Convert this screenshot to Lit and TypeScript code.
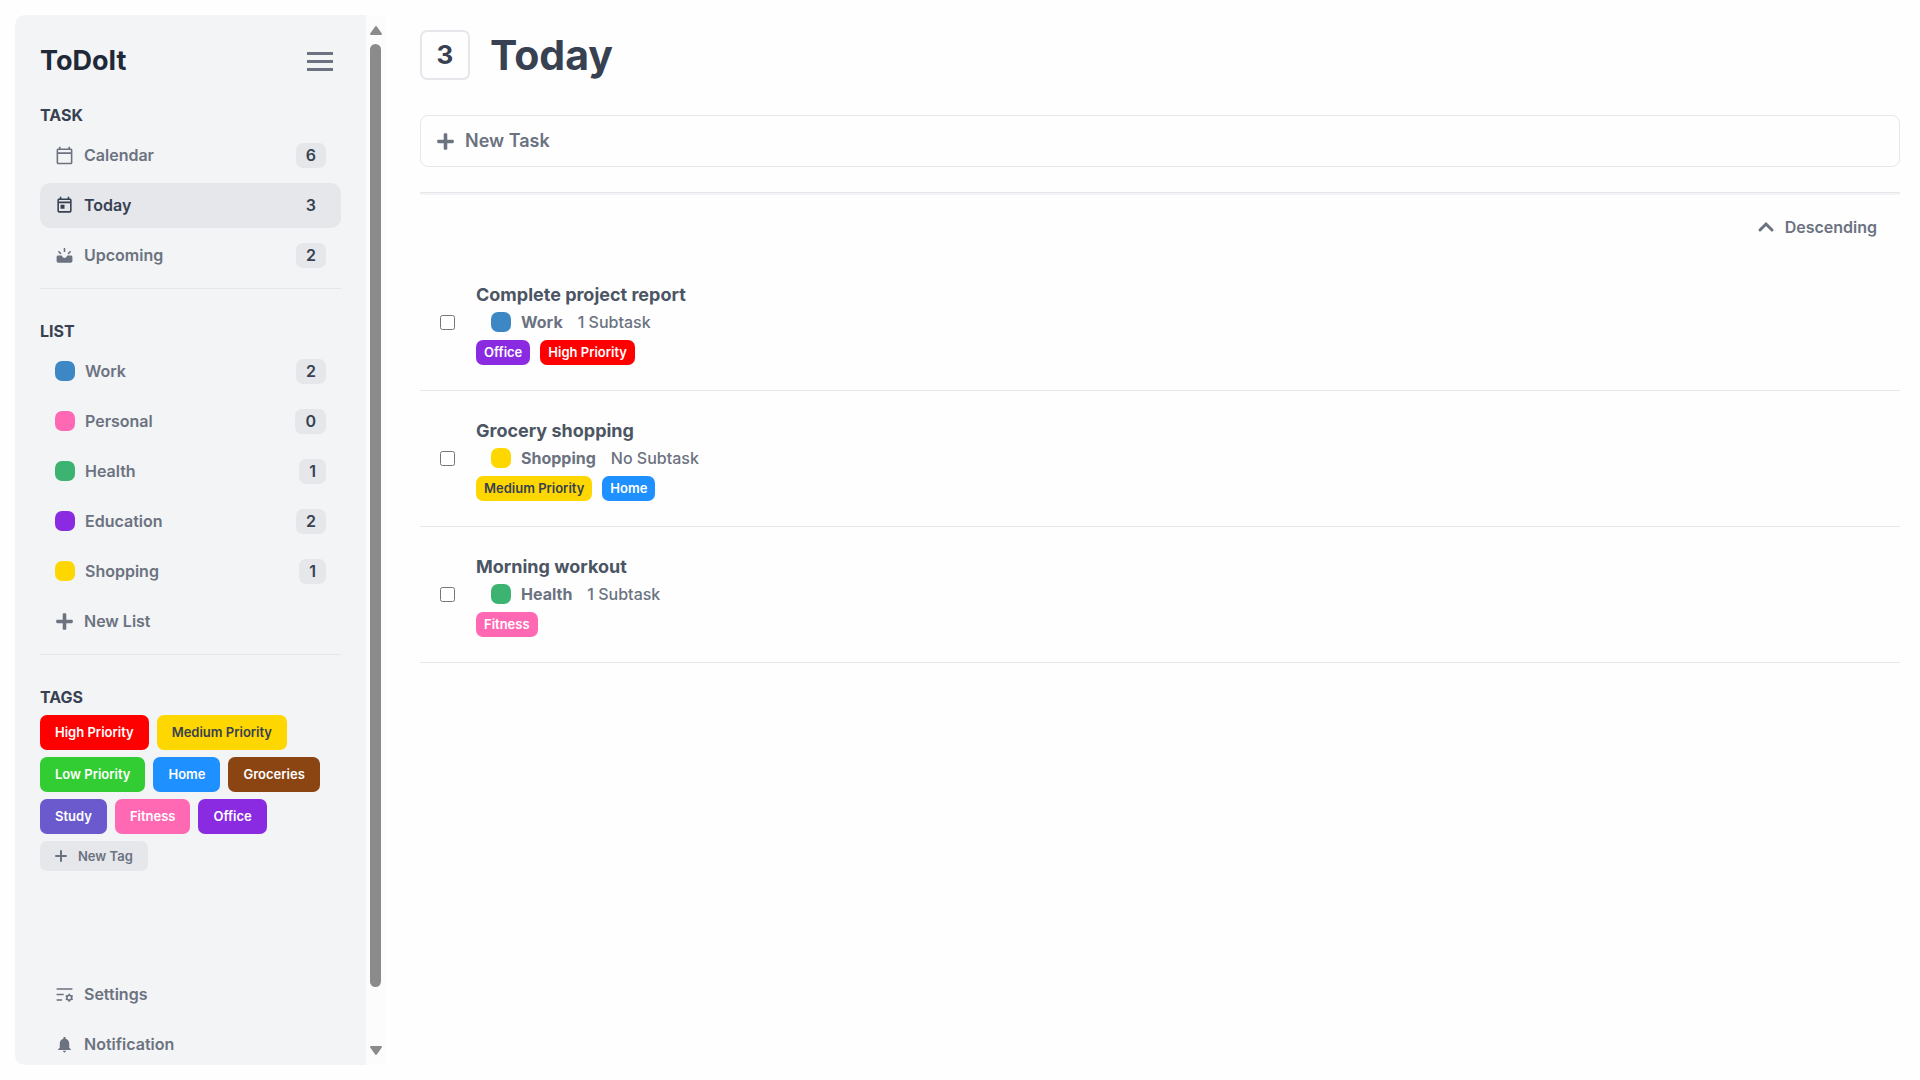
import { LitElement, html, css, svg, nothing } from "lit";
import { customElement, property } from "lit/decorators.js";
import { classMap } from "lit/directives/class-map.js";
import { styleMap } from "lit/directives/style-map.js";

interface NavEntry {
  label: string;
  icon: IconName;
  count?: number;
}

interface TaskEntry {
  title: string;
  list: string;
  subtasks: string;
  tags: string[];
}

const PLUS_PATH =
  "M416 208H272V64c0-17.67-14.33-32-32-32h-32c-17.67 0-32 14.33-32 32v144H32c-17.67 0-32 14.33-32 32v32c0 17.67 14.33 32 32 32h144v144c0 17.67 14.33 32 32 32h32c17.67 0 32-14.33 32-32V304h144c17.67 0 32-14.33 32-32v-32c0-17.67-14.33-32-32-32z";

const ICONS = {
  calendar: {
    box: "0 0 24 24",
    art: svg`<path d="M20 3h-1V1h-2v2H7V1H5v2H4c-1.1 0-2 .9-2 2v16c0 1.1.9 2 2 2h16c1.1 0 2-.9 2-2V5c0-1.1-.9-2-2-2zm0 18H4V10h16v11zm0-13H4V5h16v3z"/>`,
  },
  today: {
    box: "0 0 24 24",
    art: svg`<path d="M19 3h-1V1h-2v2H8V1H6v2H5c-1.11 0-1.99.9-1.99 2L3 19c0 1.1.89 2 2 2h14c1.1 0 2-.9 2-2V5c0-1.1-.9-2-2-2zm0 16H5V9h14v10zm0-12H5V5h14v2zM7 11h5v5H7z"/>`,
  },
  upcoming: {
    box: "0 0 24 24",
    art: svg`<path d="M4 12h4c.6 0 .9.4 1.1.9.5 1.2 1.6 2.1 2.9 2.1s2.4-.9 2.9-2.1c.2-.5.5-.9 1.1-.9h4c1.1 0 2 .9 2 2v5c0 1.1-.9 2-2 2H4c-1.1 0-2-.9-2-2v-5c0-1.1.9-2 2-2z"/><path d="M12 2.500v5M4.300 6.700l3.200 3.200M19.700 6.700l-3.200 3.200" fill="none" stroke="currentColor" stroke-width="2"/>`,
  },
  settings: {
    box: "0 0 24 24",
    art: svg`<path d="M2 18h7v2H2v-2zm0-7h9v2H2v-2zm0-7h20v2H2V4zm18.674 9.025l1.156-.391 1 1.732-.916.805a4.017 4.017 0 0 1 0 1.658l.916.805-1 1.732-1.156-.391c-.41.37-.898.655-1.435.83L19 21h-2l-.24-1.196a3.997 3.997 0 0 1-1.434-.83l-1.156.392-1-1.732.916-.805a4.017 4.017 0 0 1 0-1.658l-.916-.805 1-1.732 1.156.391c.41-.37.898-.655 1.435-.83L17 11h2l.24 1.196c.536.174 1.024.46 1.434.83zM18 18a2 2 0 1 0 0-4 2 2 0 0 0 0 4z"/>`,
  },
  bell: {
    box: "0 0 24 24",
    art: svg`<path d="M12 22c1.1 0 2-.9 2-2h-4c0 1.1.9 2 2 2zm6-6v-5c0-3.07-1.63-5.64-4.5-6.32V4c0-.83-.67-1.5-1.5-1.5s-1.5.67-1.5 1.5v.68C7.64 5.36 6 7.92 6 11v5l-2 2v1h16v-1l-2-2z"/>`,
  },
  plus: { box: "0 0 448 512", art: svg`<path d=${PLUS_PATH} />` },
  plusThin: {
    box: "0 0 12 12",
    art: svg`<path d="M6 1v10M1 6h10" fill="none" stroke="currentColor" stroke-width="2" stroke-linecap="round"/>`,
  },
  chevron: {
    box: "0 0 20 20",
    art: svg`<path d="M4 13l6-6 6 6" fill="none" stroke="currentColor" stroke-width="3" stroke-linecap="round"/>`,
  },
  menu: {
    box: "0 0 26 26",
    art: svg`<path d="M0 4h26v3H0zM0 12h26v3H0zM0 20h26v3H0z"/>`,
  },
};

type IconName = keyof typeof ICONS;

const LIST_COLORS: Record<string, string> = {
  Work: "#3d87c5",
  Personal: "#ff69b4",
  Health: "#3cb371",
  Education: "#8a2be2",
  Shopping: "#ffd700",
};

const LISTS: [string, number][] = [
  ["Work", 2],
  ["Personal", 0],
  ["Health", 1],
  ["Education", 2],
  ["Shopping", 1],
];

const TAGS: Record<string, { back: string; ink: string }> = {
  "High Priority": { back: "#ff0000", ink: "#ffffff" },
  "Medium Priority": { back: "#ffd700", ink: "#374151" },
  "Low Priority": { back: "#32cd32", ink: "#ffffff" },
  Home: { back: "#1e90ff", ink: "#ffffff" },
  Groceries: { back: "#8b4513", ink: "#ffffff" },
  Study: { back: "#6a5acd", ink: "#ffffff" },
  Fitness: { back: "#ff69b4", ink: "#ffffff" },
  Office: { back: "#8a2be2", ink: "#ffffff" },
};

const TASK_NAV: NavEntry[] = [
  { label: "Calendar", icon: "calendar", count: 6 },
  { label: "Today", icon: "today", count: 3 },
  { label: "Upcoming", icon: "upcoming", count: 2 },
];

const FOOT_NAV: NavEntry[] = [
  { label: "Settings", icon: "settings" },
  { label: "Notification", icon: "bell" },
];

const TASKS: TaskEntry[] = [
  { title: "Complete project report", list: "Work", subtasks: "1 Subtask", tags: ["Office", "High Priority"] },
  { title: "Grocery shopping", list: "Shopping", subtasks: "No Subtask", tags: ["Medium Priority", "Home"] },
  { title: "Morning workout", list: "Health", subtasks: "1 Subtask", tags: ["Fitness"] },
];

const base = css`
  *,
  *::before,
  *::after {
    box-sizing: border-box;
  }
  h1,
  h2,
  h3,
  p,
  ul {
    margin: 0;
    padding: 0;
  }
  ul {
    list-style: none;
  }
  a {
    color: inherit;
    text-decoration: none;
  }
  button,
  input {
    font: inherit;
    color: inherit;
    border: 0;
    background: none;
    padding: 0;
  }
  button {
    cursor: pointer;
  }
  .icon {
    display: block;
    flex: none;
    width: 19px;
    height: 19px;
    fill: currentColor;
  }
  .swatch {
    flex: none;
    width: 20px;
    height: 20px;
    border-radius: 7px;
  }
`;

const icon = (name: IconName) =>
  svg`<svg class="icon" viewBox=${ICONS[name].box} aria-hidden="true">${ICONS[name].art}</svg>`;

const swatch = (list: string) =>
  html`<span class="swatch" style=${styleMap({ background: LIST_COLORS[list] })}></span>`;

const tagStyle = (name: string) => styleMap({ background: TAGS[name].back, color: TAGS[name].ink });

@customElement("side-bar")
export class SideBar extends LitElement {
  @property() current = "Today";

  static styles = [
    base,
    css`
      :host {
        display: flex;
        flex: none;
        width: 370px;
        height: calc(100vh - 30px);
        border-radius: 10px 0 0 10px;
        overflow: hidden;
        background: #f3f4f6;
      }
      .content {
        flex: 1;
        min-width: 0;
        overflow: hidden;
        padding: 25px 25px 0;
      }
      .brand {
        display: flex;
        align-items: center;
        justify-content: space-between;
        height: 42px;
        padding-right: 8px;
        margin-bottom: 21px;
      }
      .logo {
        font-size: 27px;
        font-weight: 700;
        color: #1f2937;
      }
      .menu {
        color: #6b7280;
      }
      .menu .icon {
        width: 26px;
        height: 26px;
      }
      .heading {
        font-size: 16px;
        line-height: 24px;
        font-weight: 700;
        color: #374151;
        margin-bottom: 6px;
      }
      .rows {
        display: flex;
        flex-direction: column;
        gap: 5px;
      }
      .row {
        display: flex;
        align-items: center;
        gap: 10px;
        width: 100%;
        height: 45px;
        padding: 0 15px 1px;
        border-radius: 10px;
        font-weight: 600;
        color: #6b7280;
      }
      .row.current {
        background: #e5e7eb;
        color: #374151;
      }
      .count {
        margin-left: auto;
        padding: 0 10px;
        line-height: 25px;
        border-radius: 7px;
        background: #e5e7eb;
        color: #374151;
      }
      .rule {
        height: 1px;
        margin: 10px 0 30px;
        border: 0;
        background: #e5e7eb;
      }
      .tags {
        display: flex;
        flex-wrap: wrap;
        gap: 7px 8px;
        font-size: 13px;
        font-weight: 600;
      }
      .tag {
        height: 35px;
        padding: 0 15px 2px;
        border-radius: 7px;
      }
      .new-tag {
        display: flex;
        align-items: center;
        gap: 11px;
        height: 30px;
        padding: 0 15px;
        border-radius: 7px;
        background: #e5e7eb;
        color: #6b7280;
      }
      .new-tag .icon {
        width: 12px;
        height: 12px;
      }
      .foot {
        margin-top: 101px;
      }
      .scroll {
        display: flex;
        flex-direction: column;
        align-items: center;
        flex: none;
        width: 19px;
        padding: 10px 0 9px;
        background: #fcfcfc;
        color: #8b8b8b;
      }
      .arrow {
        width: 12px;
        height: 10px;
        fill: currentColor;
        stroke: currentColor;
        stroke-width: 2;
        stroke-linejoin: round;
      }
      .track {
        flex: 1;
        width: 11px;
        margin: 9px 0;
      }
      .thumb {
        width: 11px;
        height: 95%;
        border-radius: 6px;
        background: #8b8b8b;
      }
    `,
  ];

  private row({ label, icon: name, count }: NavEntry) {
    return html`<li>
      <a class=${classMap({ row: true, current: label === this.current })} href="#${label.toLowerCase()}">
        ${icon(name)}<span>${label}</span>
        ${count === undefined ? nothing : html`<span class="count">${count}</span>`}
      </a>
    </li>`;
  }

  render() {
    return html`
      <nav class="content">
        <div class="brand">
          <span class="logo">ToDoIt</span>
          <button class="menu" aria-label="Menu">${icon("menu")}</button>
        </div>
        <h2 class="heading">TASK</h2>
        <ul class="rows">
          ${TASK_NAV.map((entry) => this.row(entry))}
        </ul>
        <hr class="rule" />
        <h2 class="heading">LIST</h2>
        <ul class="rows">
          ${LISTS.map(
            ([name, count]) => html`<li>
              <a class="row" href="#${name.toLowerCase()}">
                ${swatch(name)}<span>${name}</span><span class="count">${count}</span>
              </a>
            </li>`,
          )}
          <li><button class="row">${icon("plus")}<span>New List</span></button></li>
        </ul>
        <hr class="rule" />
        <h2 class="heading">TAGS</h2>
        <div class="tags">
          ${Object.keys(TAGS).map((name) => html`<button class="tag" style=${tagStyle(name)}>${name}</button>`)}
          <button class="new-tag">${icon("plusThin")}<span>New Tag</span></button>
        </div>
        <ul class="rows foot">
          ${FOOT_NAV.map((entry) => this.row(entry))}
        </ul>
      </nav>
      <div class="scroll" aria-hidden="true">
        <svg class="arrow" viewBox="0 0 12 10"><path d="M6 2l5 7H1z" /></svg>
        <div class="track"><div class="thumb"></div></div>
        <svg class="arrow" viewBox="0 0 12 10"><path d="M1 1h10L6 8z" /></svg>
      </div>
    `;
  }
}

@customElement("task-item")
export class TaskItem extends LitElement {
  @property({ attribute: false }) task!: TaskEntry;

  static styles = [
    base,
    css`
      :host {
        display: block;
      }
      .task {
        display: flex;
        align-items: center;
        gap: 21px;
        padding: 25px 20px;
        border-bottom: 1px solid #e5e7eb;
      }
      .check {
        flex: none;
        width: 15px;
        height: 15px;
        margin: 0;
      }
      .title {
        display: block;
        font-size: 18px;
        line-height: 30px;
        font-weight: 700;
        color: #4b5563;
      }
      .meta {
        display: flex;
        align-items: center;
        height: 24px;
        padding-left: 15px;
        margin-bottom: 6px;
        color: #6b7280;
      }
      .list {
        margin: 0 15px 0 10px;
        font-weight: 700;
      }
      .subtasks {
        font-weight: 500;
      }
      .tags {
        display: flex;
        gap: 10px;
        font-size: 13px;
        font-weight: 600;
      }
      .tag {
        padding: 0 8px 1px;
        line-height: 24px;
        border-radius: 7px;
      }
    `,
  ];

  render() {
    const { title, list, subtasks, tags } = this.task;
    return html`<div class="task">
      <input class="check" id="done" type="checkbox" />
      <div>
        <label class="title" for="done">${title}</label>
        <div class="meta">
          ${swatch(list)}<span class="list">${list}</span><span class="subtasks">${subtasks}</span>
        </div>
        <div class="tags">
          ${tags.map((name) => html`<span class="tag" style=${tagStyle(name)}>${name}</span>`)}
        </div>
      </div>
    </div>`;
  }
}

@customElement("app-root")
export class AppRoot extends LitElement {
  static styles = [
    base,
    css`
      :host {
        display: flex;
        gap: 35px;
        min-height: 100vh;
        box-sizing: border-box;
        padding: 15px 20px 15px 15px;
        background: #fefefe;
        font-family: Inter, "Liberation Sans", sans-serif;
        font-size: 16px;
        line-height: 24px;
      }
      .main {
        flex: 1;
        min-width: 0;
        padding-top: 15px;
      }
      .top {
        display: flex;
        align-items: center;
        gap: 20px;
        color: #374151;
        font-weight: 700;
      }
      .total {
        display: grid;
        place-items: center;
        width: 50px;
        height: 50px;
        border: 2px solid #e5e7eb;
        border-radius: 7px;
        font-size: 26px;
      }
      .page-title {
        font-size: 41px;
        line-height: 50px;
      }
      .new-task {
        display: flex;
        align-items: center;
        gap: 10px;
        height: 52px;
        margin: 35px 0 25px;
        padding: 0 15px;
        border: 1px solid #e5e7eb;
        border-radius: 8px;
        color: #6b7280;
      }
      .field {
        flex: 1;
        min-width: 0;
        font-size: 18px;
        font-weight: 600;
        outline: none;
      }
      .field::placeholder {
        color: #6b7280;
        opacity: 1;
      }
      .rule {
        height: 3px;
        border-top: 1px solid #e5e7eb;
        background: #f3f4f6;
      }
      .sort {
        display: flex;
        align-items: center;
        gap: 9px;
        margin: 20px 23px 16px auto;
        font-weight: 600;
        color: #6b7280;
      }
      .sort .icon {
        width: 20px;
        height: 20px;
      }
    `,
  ];

  render() {
    return html`
      <side-bar current="Today"></side-bar>
      <main class="main">
        <header class="top">
          <span class="total">${TASKS.length}</span>
          <h1 class="page-title">Today</h1>
        </header>
        <label class="new-task">
          ${icon("plus")}
          <input class="field" type="text" placeholder="New Task" aria-label="New Task" />
        </label>
        <div class="rule"></div>
        <button class="sort">${icon("chevron")}<span>Descending</span></button>
        ${TASKS.map((task) => html`<task-item .task=${task}></task-item>`)}
      </main>
    `;
  }
}
